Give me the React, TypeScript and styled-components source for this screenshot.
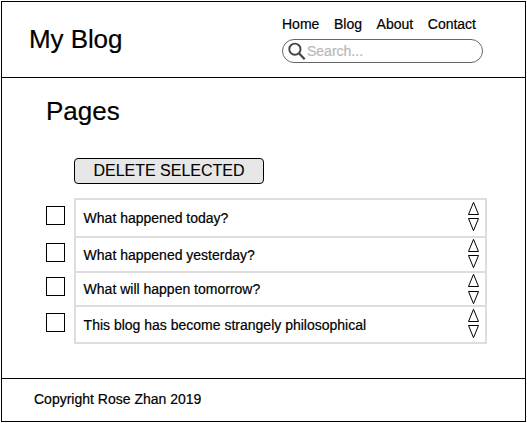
import React from "react";
import styled, { createGlobalStyle } from "styled-components";

const GlobalStyle = createGlobalStyle`
  * { box-sizing: border-box; }
  body {
    margin: 0;
    background: #fff;
    color: #000;
    font-family: "Liberation Sans", Arial, Helvetica, sans-serif;
    font-size: 14px;
    line-height: 16px;
    -webkit-text-stroke: 0.2px;
  }
`;

const Frame = styled.div`
  display: flex;
  flex-direction: column;
  width: 525px;
  height: 421px;
  margin: 1px;
  border: 1px solid #000;
`;

const Header = styled.header`
  display: flex;
  justify-content: space-between;
  height: 76px;
  padding: 0 42px 0 27px;
  border-bottom: 1px solid #000;
`;

const SiteTitle = styled.h1`
  margin: 22px 0 0;
  font-size: 26px;
  font-weight: 400;
  line-height: 30px;
  letter-spacing: -0.08px;
`;

const HeaderTools = styled.div`
  width: 201px;
  padding-top: 14px;
`;

const Nav = styled.nav`
  display: flex;
  gap: 14.6px;
  margin-bottom: 7px;
  white-space: nowrap;
`;

const NavLink = styled.a`
  color: inherit;
  text-decoration: none;
`;

const SearchBox = styled.label`
  display: flex;
  align-items: center;
  height: 24px;
  padding-left: 5px;
  border: 1px solid #666;
  border-radius: 12px;
`;

const SearchIcon = styled.svg`
  width: 18px;
  height: 18px;
  margin-right: 1px;
`;

const SearchInput = styled.input`
  width: 150px;
  height: 16px;
  padding: 0;
  border: 0;
  outline: 0;
  background: none;
  font: inherit;
  &::placeholder { color: #b8b8b8; opacity: 1; }
`;

const Main = styled.main`
  flex: 1;
  padding: 18px 38px 0 44px;
`;

const PageTitle = styled.h2`
  margin: 0 0 32px;
  font-size: 26px;
  font-weight: 400;
  line-height: 30px;
`;

const DeleteButton = styled.button`
  display: block;
  width: 190px;
  height: 26px;
  margin: 0 0 14px 28px;
  padding: 0;
  border: 1px solid #000;
  border-radius: 4px;
  background: #e6e6e6;
  color: #000;
  font-family: inherit;
  font-size: 16px;
  line-height: 22px;
  white-space: nowrap;
  -webkit-text-stroke: 0.1px;
`;

const PostList = styled.ul`
  margin: 0;
  padding: 0;
  list-style: none;
`;

const PostRow = styled.li<{ $height: number }>`
  display: flex;
  height: ${(p) => p.$height}px;
`;

const Checkbox = styled.input<{ $top: number }>`
  appearance: none;
  width: 19px;
  height: 19px;
  margin: ${(p) => p.$top}px 9px 0 0;
  border: 1px solid #000;
  border-radius: 0;
  background: #fff;
`;

const PostCell = styled.div<{ $last: boolean }>`
  display: flex;
  flex: 1;
  justify-content: space-between;
  padding: 0 6px 0 7.6px;
  border: 2px solid #ddd;
  border-bottom-width: ${(p) => (p.$last ? 2 : 0)}px;
`;

const PostTitle = styled.span<{ $top: number }>`
  margin-top: ${(p) => p.$top}px;
  white-space: nowrap;
`;

const Sorter = styled.div<{ $top: number; $gap: number }>`
  display: flex;
  flex-direction: column;
  gap: ${(p) => p.$gap}px;
  margin-top: ${(p) => p.$top}px;
`;

const Arrow = styled.svg`
  display: block;
  width: 11px;
  height: 13px;
  fill: none;
  stroke: #000;
`;

const Footer = styled.footer`
  height: 43px;
  padding: 12px 0 0 32px;
  border-top: 1px solid #000;
`;

const links = ["Home", "Blog", "About", "Contact"];

const posts = [
  { title: "What happened today?", height: 38, check: 8, text: 10, sort: 2, gap: 3 },
  { title: "What happened yesterday?", height: 35, check: 7, text: 9, sort: 1, gap: 3 },
  { title: "What will happen tomorrow?", height: 34, check: 6, text: 8, sort: 1, gap: 4 },
  { title: "This blog has become strangely philosophical", height: 39, check: 8, text: 10, sort: 2, gap: 3 },
];

export default function App() {
  return (
    <>
      <GlobalStyle />
      <Frame>
        <Header>
          <SiteTitle>My Blog</SiteTitle>
          <HeaderTools>
            <Nav>
              {links.map((link) => (
                <NavLink key={link}>{link}</NavLink>
              ))}
            </Nav>
            <SearchBox>
              <SearchIcon viewBox="0 0 18 18" fill="none" stroke="#444">
                <circle cx="6.9" cy="7.2" r="5.6" strokeWidth="1.9" />
                <path d="M10.9 11.2L16.7 17.2" strokeWidth="2.2" />
              </SearchIcon>
              <SearchInput placeholder="Search..." />
            </SearchBox>
          </HeaderTools>
        </Header>
        <Main>
          <PageTitle>Pages</PageTitle>
          <DeleteButton>DELETE SELECTED</DeleteButton>
          <PostList>
            {posts.map((post, i) => (
              <PostRow key={post.title} $height={post.height}>
                <Checkbox type="checkbox" aria-label={post.title} $top={post.check} />
                <PostCell $last={i === posts.length - 1}>
                  <PostTitle $top={post.text}>{post.title}</PostTitle>
                  <Sorter $top={post.sort} $gap={post.gap}>
                    <Arrow viewBox="0 0 11 13">
                      <path d="M.5 12.5L5.5 .3L10.5 12.5Z" />
                    </Arrow>
                    <Arrow viewBox="0 0 11 13">
                      <path d="M.5 .5L5.5 12.7L10.5 .5Z" />
                    </Arrow>
                  </Sorter>
                </PostCell>
              </PostRow>
            ))}
          </PostList>
        </Main>
        <Footer>Copyright Rose Zhan 2019</Footer>
      </Frame>
    </>
  );
}
